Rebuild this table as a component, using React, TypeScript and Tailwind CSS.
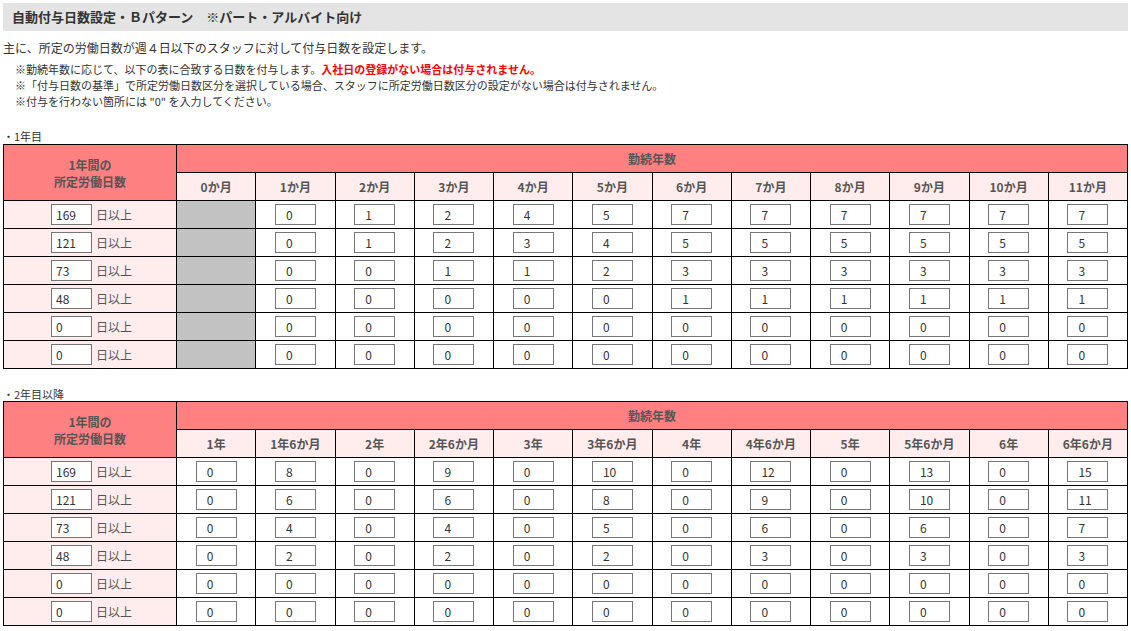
const font = { fontFamily: '"Noto Sans CJK JP", "Noto Sans", sans-serif' };

const firstYearCols = ["0か月", "1か月", "2か月", "3か月", "4か月", "5か月", "6か月", "7か月", "8か月", "9か月", "10か月", "11か月"];
const firstYearRows = [
  { min: "169", days: [null, 0, 1, 2, 4, 5, 7, 7, 7, 7, 7, 7] },
  { min: "121", days: [null, 0, 1, 2, 3, 4, 5, 5, 5, 5, 5, 5] },
  { min: "73", days: [null, 0, 0, 1, 1, 2, 3, 3, 3, 3, 3, 3] },
  { min: "48", days: [null, 0, 0, 0, 0, 0, 1, 1, 1, 1, 1, 1] },
  { min: "0", days: [null, 0, 0, 0, 0, 0, 0, 0, 0, 0, 0, 0] },
  { min: "0", days: [null, 0, 0, 0, 0, 0, 0, 0, 0, 0, 0, 0] },
];

const laterCols = ["1年", "1年6か月", "2年", "2年6か月", "3年", "3年6か月", "4年", "4年6か月", "5年", "5年6か月", "6年", "6年6か月"];
const laterRows = [
  { min: "169", days: [0, 8, 0, 9, 0, 10, 0, 12, 0, 13, 0, 15] },
  { min: "121", days: [0, 6, 0, 6, 0, 8, 0, 9, 0, 10, 0, 11] },
  { min: "73", days: [0, 4, 0, 4, 0, 5, 0, 6, 0, 6, 0, 7] },
  { min: "48", days: [0, 2, 0, 2, 0, 2, 0, 3, 0, 3, 0, 3] },
  { min: "0", days: [0, 0, 0, 0, 0, 0, 0, 0, 0, 0, 0, 0] },
  { min: "0", days: [0, 0, 0, 0, 0, 0, 0, 0, 0, 0, 0, 0] },
];

type Row = { min: string; days: (number | null)[] };

function Box({ value, first }: { value: string; first?: boolean }) {
  return (
    <input
      readOnly
      value={value}
      style={font}
      className={
        "h-[21px] w-[41px] border border-[#767676] bg-white text-[12px] leading-none text-[#333] outline-none " +
        (first ? "pl-[4px]" : "pl-[10px]")
      }
    />
  );
}

function GrantTable({ cols, rows }: { cols: string[]; rows: Row[] }) {
  return (
    <table className="w-full table-fixed border-collapse border border-black text-[12px] text-[#444]">
      <colgroup>
        <col className="w-[173px]" />
        {cols.map((c) => (
          <col key={c} />
        ))}
      </colgroup>
      <thead>
        <tr className="h-[28px]">
          <th rowSpan={2} className="border border-black bg-[#ff8080] font-bold leading-[17px] text-[#555]">
            1年間の
            <br />
            所定労働日数
          </th>
          <th colSpan={12} className="border border-black bg-[#ff8080] font-bold text-[#555]">
            勤続年数
          </th>
        </tr>
        <tr className="h-[28px]">
          {cols.map((c) => (
            <th key={c} className="border border-black bg-[#ffeded] font-bold text-[#555]">
              {c}
            </th>
          ))}
        </tr>
      </thead>
      <tbody>
        {rows.map((r, i) => (
          <tr key={i} className="h-[28px]">
            <td className="border border-black bg-[#ffeded] p-0">
              <div className="flex items-center justify-center gap-[4px] pl-[3px]">
                <Box value={r.min} first />
                <span className="text-[#555]">日以上</span>
              </div>
            </td>
            {r.days.map((d, j) =>
              d === null ? (
                <td key={j} className="border border-black bg-[#c2c2c2] p-0" />
              ) : (
                <td key={j} className="border border-black bg-white p-0 text-center">
                  <Box value={String(d)} />
                </td>
              )
            )}
          </tr>
        ))}
      </tbody>
    </table>
  );
}

export default function App() {
  return (
    <div style={font} className="min-h-[631px] bg-white px-[3px] pt-[3px] text-[#333]">
      <div className="flex h-[28px] items-center bg-[#e4e4e4] pl-[9px] text-[13px] font-bold text-[#333]">
        自動付与日数設定・Ｂパターン　※パート・アルバイト向け
      </div>

      <p className="mt-[8px] text-[12px] leading-[18px]">
        主に、所定の労働日数が週４日以下のスタッフに対して付与日数を設定します。
      </p>
      <div className="mt-[4px] pl-[12px] text-[11px] leading-[16px]">
        <p>
          ※勤続年数に応じて、以下の表に合致する日数を付与します。
          <span className="font-bold text-[#ff0000]">入社日の登録がない場合は付与されません。</span>
        </p>
        <p>※「付与日数の基準」で所定労働日数区分を選択している場合、スタッフに所定労働日数区分の設定がない場合は付与されません。</p>
        <p>※付与を行わない箇所には "0" を入力してください。</p>
      </div>

      <p className="mt-[19px] text-[11px] leading-[16px]">・1年目</p>
      <GrantTable cols={firstYearCols} rows={firstYearRows} />

      <p className="mt-[18px] text-[11px] leading-[14px]">・2年目以降</p>
      <GrantTable cols={laterCols} rows={laterRows} />
    </div>
  );
}
